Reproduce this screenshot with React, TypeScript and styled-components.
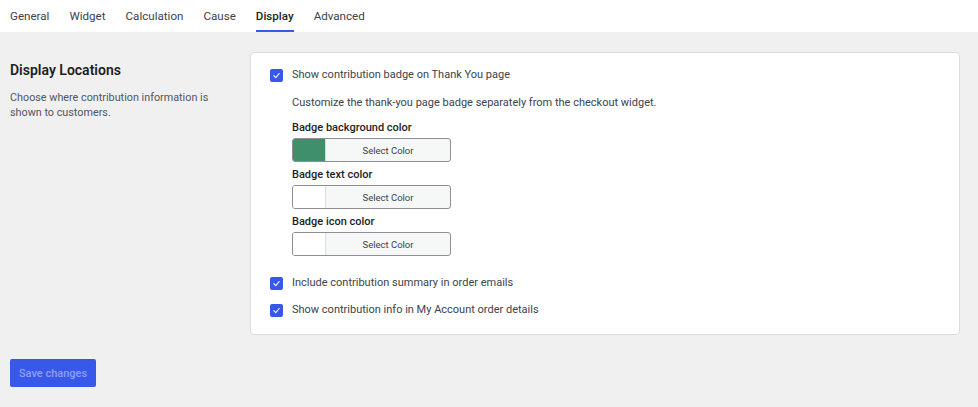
import React from 'react'
import styled, { createGlobalStyle } from 'styled-components'

const GlobalStyle = createGlobalStyle`
    html, body {
        margin: 0;
        padding: 0;
        background: #f0f0f1;
    }
    body {
        font-family: Roboto, "Noto Sans", sans-serif;
        color: #1e1e1e;
        -webkit-font-smoothing: antialiased;
    }
`

const Page = styled.div`
    width: 978px;
    height: 407px;
    overflow: hidden;
`

const TabBar = styled.nav`
    display: flex;
    height: 32px;
    background: #fff;
    padding-left: 10px;
    gap: 20px;
`

const Tab = styled.a<{ $active?: boolean }>`
    display: flex;
    align-items: center;
    font-size: 11.6px;
    color: ${p => (p.$active ? '#1e1e1e' : '#3c434a')};
    font-weight: ${p => (p.$active ? 500 : 400)};
    border-bottom: 2px solid ${p => (p.$active ? '#3858e9' : 'transparent')};
    padding-top: 2px;
    cursor: pointer;
`

const Section = styled.section`
    display: flex;
    gap: 20px;
    padding: 20px 18px 0 10px;
`

const Intro = styled.div`
    width: 220px;
    padding-top: 10px;
`

const Heading = styled.h2`
    margin: 0 0 11px;
    font-size: 14px;
    line-height: 17px;
    font-weight: 600;
    color: #1e1e1e;
`

const Help = styled.p`
    margin: 0;
    font-size: 10.8px;
    line-height: 15px;
    color: #50575e;
`

const Card = styled.div`
    flex: 1;
    background: #fff;
    border: 1px solid #dcdcde;
    border-radius: 4px;
    padding: 15px 19px 17px;
`

const CheckRow = styled.label`
    display: flex;
    align-items: center;
    gap: 9px;
    font-size: 11px;
    line-height: 14px;
    color: #3c434a;
    height: 14px;
`

const Box = styled.span`
    width: 13px;
    height: 13px;
    border-radius: 2px;
    background: #3858e9;
    display: flex;
    align-items: center;
    justify-content: center;
`

const Indent = styled.div`
    padding-left: 22px;
    margin: 14px 0 20px;
`

const Note = styled.p`
    margin: 0 0 11px;
    font-size: 11px;
    line-height: 14px;
    color: #3c434a;
`

const FieldLabel = styled.div`
    font-size: 11px;
    line-height: 14px;
    font-weight: 500;
    color: #1e1e1e;
    margin-bottom: 3px;
`

const Field = styled.div`
    margin-bottom: 6px;
`

const ColorButton = styled.button`
    display: flex;
    width: 159px;
    height: 24px;
    padding: 0;
    border: 1px solid #8c8f94;
    border-radius: 3px;
    background: #f6f7f7;
    overflow: hidden;
    font-family: inherit;
    cursor: pointer;
`

const Swatch = styled.span<{ $color: string }>`
    width: 32px;
    height: 100%;
    background: ${p => p.$color};
    border-right: 1px solid #dcdcde;
`

const ButtonText = styled.span`
    flex: 1;
    align-self: center;
    font-size: 9.5px;
    color: #3c434a;
`

const Stack = styled.div`
    display: flex;
    flex-direction: column;
    gap: 13px;
`

const SaveButton = styled.button`
    margin: 24px 0 0 10px;
    height: 28px;
    width: 86px;
    background: #3858e9;
    border: none;
    border-radius: 2px;
    color: #8ea0f3;
    font-family: inherit;
    font-size: 11px;
    font-weight: 500;
`

const Check = () => (
    <Box>
        <svg width="9" height="9" viewBox="0 0 10 10">
            <path d="M2 5.2 L4.2 7.3 L8 2.8" fill="none" stroke="#fff" strokeWidth="1.2" strokeLinecap="round" strokeLinejoin="round" />
        </svg>
    </Box>
)

const tabs = ['General', 'Widget', 'Calculation', 'Cause', 'Display', 'Advanced']

const colorFields = [
    { label: 'Badge background color', color: '#3f8f6b' },
    { label: 'Badge text color', color: '#ffffff' },
    { label: 'Badge icon color', color: '#ffffff' },
]

const App = () => {
    return (
        <Page>
            <GlobalStyle />
            <TabBar>
                {tabs.map(t => (
                    <Tab key={t} $active={t === 'Display'}>{t}</Tab>
                ))}
            </TabBar>
            <Section>
                <Intro>
                    <Heading>Display Locations</Heading>
                    <Help>Choose where contribution information is shown to customers.</Help>
                </Intro>
                <Card>
                    <CheckRow><Check />Show contribution badge on Thank You page</CheckRow>
                    <Indent>
                        <Note>Customize the thank-you page badge separately from the checkout widget.</Note>
                        {colorFields.map(f => (
                            <Field key={f.label}>
                                <FieldLabel>{f.label}</FieldLabel>
                                <ColorButton>
                                    <Swatch $color={f.color} />
                                    <ButtonText>Select Color</ButtonText>
                                </ColorButton>
                            </Field>
                        ))}
                    </Indent>
                    <Stack>
                        <CheckRow><Check />Include contribution summary in order emails</CheckRow>
                        <CheckRow><Check />Show contribution info in My Account order details</CheckRow>
                    </Stack>
                </Card>
            </Section>
            <SaveButton>Save changes</SaveButton>
        </Page>
    )
}

export default App
